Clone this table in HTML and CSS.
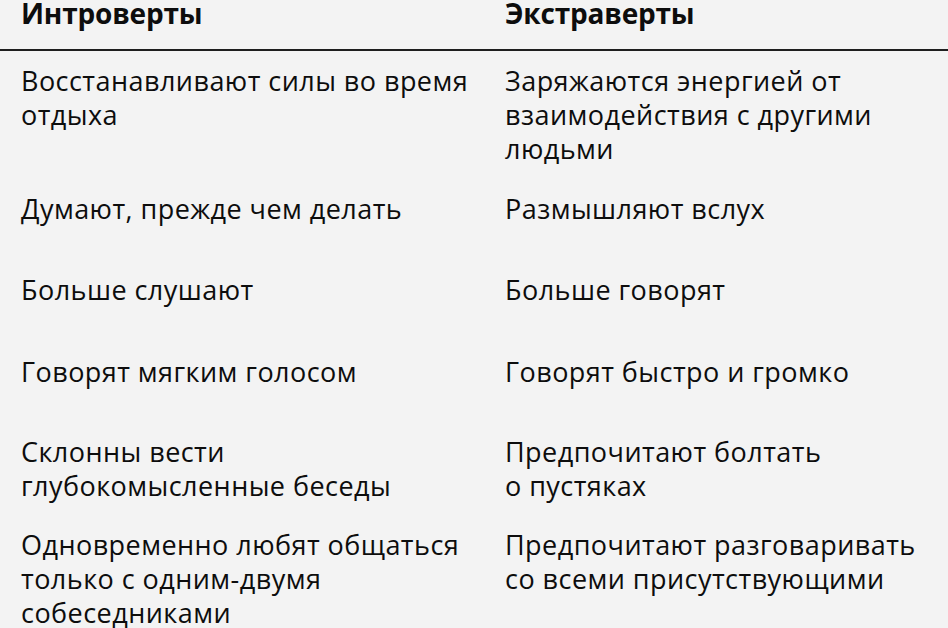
FILE: index.html
```html
<!DOCTYPE html>
<html lang="ru">
<head>
<meta charset="utf-8">
<link rel="stylesheet" href="styles.css">
</head>
<body>
<div class="table">
  <div class="head">
    <div class="th">Интроверты</div>
    <div class="th">Экстраверты</div>
  </div>
  <div class="row r1">
    <div class="td">Восстанавливают силы во время<br>отдыха</div>
    <div class="td">Заряжаются энергией от<br>взаимодействия с другими<br>людьми</div>
  </div>
  <div class="row r2">
    <div class="td">Думают, прежде чем делать</div>
    <div class="td">Размышляют вслух</div>
  </div>
  <div class="row r3">
    <div class="td">Больше слушают</div>
    <div class="td">Больше говорят</div>
  </div>
  <div class="row r4">
    <div class="td">Говорят мягким голосом</div>
    <div class="td">Говорят быстро и громко</div>
  </div>
  <div class="row r5">
    <div class="td">Склонны вести<br>глубокомысленные беседы</div>
    <div class="td">Предпочитают болтать<br>о пустяках</div>
  </div>
  <div class="row r6">
    <div class="td">Одновременно любят общаться<br>только с одним-двумя<br>собеседниками</div>
    <div class="td">Предпочитают разговаривать<br>со всеми присутствующими</div>
  </div>
</div>
</body>
</html>
```

FILE: styles.css
```css
html, body {
  margin: 0;
  padding: 0;
  background: #f3f3f3;
}
body {
  width: 948px;
  height: 628px;
  overflow: hidden;
  font-family: "Open Sans", "Noto Sans", sans-serif;
  color: #0d0d0d;
}
.table {
  display: flex;
  flex-direction: column;
}
.head {
  display: grid;
  grid-template-columns: 484px 1fr;
  padding: 0 0 23px 21px;
  border-bottom: 2px solid #1e1e1e;
}
.th {
  font-weight: 700;
  font-size: 28px;
  line-height: 26px;
  letter-spacing: -0.2px;
}
.row {
  display: grid;
  grid-template-columns: 484px 1fr;
  padding-left: 21px;
  font-size: 27px;
  line-height: 34px;
  letter-spacing: 0.45px;
}
.r1 { margin-top: 13px; }
.r2 { margin-top: 26px; }
.r3 { margin-top: 47px; }
.r4 { margin-top: 48px; }
.r5 { margin-top: 46px; }
.r6 { margin-top: 25px; }
```
